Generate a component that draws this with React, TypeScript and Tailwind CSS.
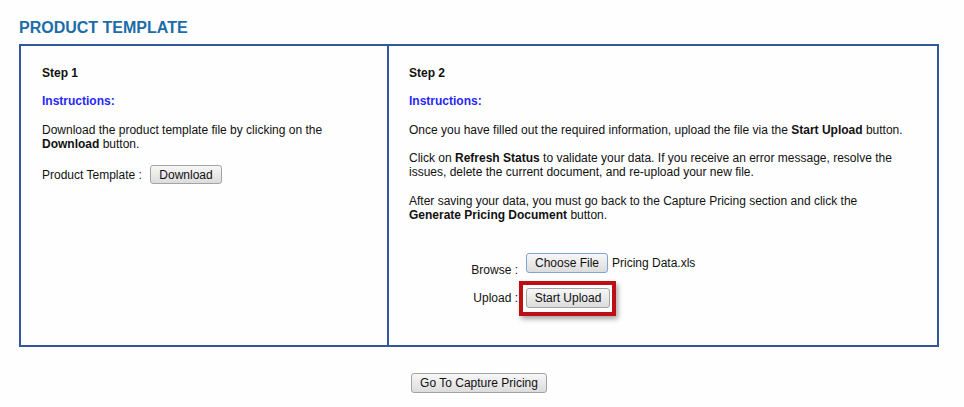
import React from "react";

const btn =
  "flex items-center justify-center rounded-[3px] border border-[#a3a3a3] bg-gradient-to-b from-[#f7f7f7] to-[#dcdcdc] text-[12px] leading-[14px] text-[#111]";

export default function App() {
  return (
    <div
      className="min-h-[407px] bg-[#fefefe] pl-[19px] pt-[19px] text-[12px] leading-[14px] text-[#111]"
      style={{ fontFamily: '"Liberation Sans", Arial, sans-serif' }}
    >
      <div className="w-[920px]">
        <h1 className="text-[16px] font-bold leading-[18px] text-[#1c6ca8]">PRODUCT TEMPLATE</h1>

        <div className="mt-[7px] flex h-[303px] border-2 border-[#30599b]">
          {/* Step 1 */}
          <div className="w-[366px] pl-[21px] pr-[21px] pt-[20px]">
            <div className="mb-[14px] font-bold">Step 1</div>
            <div className="mb-[15px] font-bold text-[#2727fa]">Instructions:</div>
            <p className="mb-[14px]">
              Download the product template file by clicking on the <b>Download</b> button.
            </p>
            <div className="flex items-center">
              <span className="w-[108px] whitespace-nowrap">Product Template :</span>
              <button className={`${btn} h-[19px] w-[72px]`}>Download</button>
            </div>
          </div>

          {/* Step 2 */}
          <div className="flex-1 border-l-2 border-[#30599b] pl-[20px] pr-[18px] pt-[20px]">
            <div className="mb-[14px] font-bold">Step 2</div>
            <div className="mb-[15px] font-bold text-[#2727fa]">Instructions:</div>
            <p className="mb-[14px]">
              Once you have filled out the required information, upload the file via the <b>Start Upload</b> button.
            </p>
            <p className="mb-[15px]">
              Click on <b>Refresh Status</b> to validate your data. If you receive an error message, resolve the
              <br />
              issues, delete the current document, and re-upload your new file.
            </p>
            <p>
              After saving your data, you must go back to the Capture Pricing section and click the
              <br />
              <b>Generate Pricing Document</b> button.
            </p>

            <div className="mt-[31px] flex items-start">
              <span className="w-[109px] pt-[10px] text-right">Browse :</span>
              <div className="ml-[8px] flex items-center">
                <button className="flex h-[20px] w-[82px] items-center justify-center rounded-[3px] border border-[#7ea6d4] bg-gradient-to-b from-[#f7f7f7] to-[#dcdcdc] text-[12px] leading-[14px] text-[#111]">
                  Choose File
                </button>
                <span className="ml-[4px]">Pricing Data.xls</span>
              </div>
            </div>

            <div className="mt-[11px] flex items-center">
              <span className="w-[109px] text-right">Upload :</span>
              <div className="relative ml-[8px]">
                <button className={`${btn} h-[20px] w-[84px]`}>Start Upload</button>
                <span className="pointer-events-none absolute left-[-7px] top-[-7px] h-[35px] w-[97px] border-4 border-[#bd0f14] shadow-[2px_3px_5px_rgba(0,0,0,0.35)]" />
              </div>
            </div>
          </div>
        </div>

        <div className="mt-[26px] flex justify-center">
          <button className={`${btn} h-[20px] w-[136px]`}>Go To Capture Pricing</button>
        </div>
      </div>
    </div>
  );
}
